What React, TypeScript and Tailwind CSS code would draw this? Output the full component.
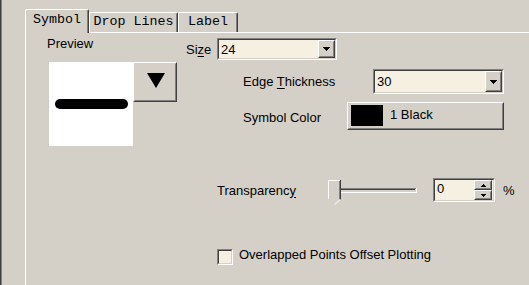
const sunkenOuter = "border border-t-[#808080] border-l-[#808080] border-b-white border-r-white";
const sunkenInner = "border border-t-[#404040] border-l-[#404040] border-b-[#d4d0c8] border-r-[#d4d0c8]";
const raisedOuter = "border border-t-white border-l-white border-b-[#404040] border-r-[#404040]";
const raisedInner = "border border-t-[#d4d0c8] border-l-[#d4d0c8] border-b-[#808080] border-r-[#808080]";

function Arrow({ up = false }: { up?: boolean }) {
  return (
    <svg width="7" height="4" viewBox="0 0 7 4" shapeRendering="crispEdges">
      <path d={up ? "M3 0h1v1h1v1h1v1h1v1H0V3h1V2h1V1h1z" : "M0 0h7v1H6v1H5v1H4v1H3V3H2V2H1V1H0z"} fill="#000" />
    </svg>
  );
}

function Combo({ value, className }: { value: string; className: string }) {
  return (
    <div className={`${sunkenOuter} ${className}`}>
      <div className={`${sunkenInner} flex h-full bg-[#f5f0e1]`}>
        <span className="flex-1 self-center pl-[2px] leading-[15px]">{value}</span>
        <div className={`${raisedOuter} h-full w-[17px]`}>
          <div className={`${raisedInner} flex h-full items-center justify-center bg-[#d4d0c8]`}>
            <Arrow />
          </div>
        </div>
      </div>
    </div>
  );
}

function SpinBtn({ up }: { up?: boolean }) {
  return (
    <div className={`${raisedOuter} h-[10px] w-[18px]`}>
      <div className={`${raisedInner} flex h-full items-center justify-center bg-[#d4d0c8]`}>
        <svg width="5" height="3" viewBox="0 0 5 3" shapeRendering="crispEdges">
          <path d={up ? "M2 0h1v1h1v1h1v1H0V2h1V1h1z" : "M0 0h5v1H4v1H3v1H2V2H1V1H0z"} fill="#000" />
        </svg>
      </div>
    </div>
  );
}

function Slider() {
  return (
    <svg width="90" height="27" viewBox="0 0 90 27" shapeRendering="crispEdges">
      {/* track */}
      <rect x="13" y="10" width="75" height="1" fill="#808080" />
      <rect x="13" y="11" width="74" height="1" fill="#404040" />
      <rect x="13" y="14" width="76" height="1" fill="#ffffff" />
      <rect x="88" y="10" width="1" height="5" fill="#ffffff" />
      {/* thumb */}
      <rect x="0" y="2" width="12" height="1" fill="#ffffff" />
      <rect x="0" y="2" width="1" height="19" fill="#ffffff" />
      <rect x="11" y="3" width="1" height="18" fill="#808080" />
      <rect x="12" y="2" width="1" height="20" fill="#404040" />
      <path d="M12.5 21.5 L6.5 26.5" stroke="#ffffff" strokeWidth="1" shapeRendering="auto" />
    </svg>
  );
}

export default function App() {
  return (
    <div className="flex h-[285px] w-[529px] overflow-hidden bg-[#d4d0c8] font-['Liberation_Sans',Arial,sans-serif] text-[13px] leading-[15px] text-black">
      {/* window edge */}
      <div className="w-[1px] bg-[#404040]" />
      <div className="w-[1px] bg-[#808080]" />
      <div className="w-[23px]" />

      <div className="flex flex-1 flex-col">
        {/* tabs */}
        <div className="flex h-[32px] items-end font-['Liberation_Mono','Courier_New',monospace] text-[13.33px]">
          <div className="relative z-10 -mb-[1px] h-[24px] w-[64px] rounded-t-[2px] border-l border-t border-r border-l-white border-t-white border-r-[#404040] bg-[#d4d0c8] pt-[2px] text-center shadow-[inset_-1px_0_#808080]">
            Symbol
          </div>
          <div className="h-[20px] w-[89px] rounded-t-[2px] border-l border-t border-r border-l-white border-t-white border-r-[#404040] pt-[1px] text-center shadow-[inset_-1px_0_#808080]">
            Drop Lines
          </div>
          <div className="h-[20px] w-[60px] rounded-t-[2px] border-l border-t border-r border-l-white border-t-white border-r-[#404040] pt-[1px] text-center shadow-[inset_-1px_0_#808080]">
            Label
          </div>
        </div>

        {/* tab page */}
        <div className="flex flex-1 flex-col border-l border-t border-white">
          <div className="flex items-start">
            {/* preview */}
            <div className="ml-[23px] mt-[3px] flex flex-col">
              <div className="-ml-[2px] h-[15px]">Preview</div>
              <div className="mt-[11px] flex items-start">
                <div className="h-[84px] w-[84px] bg-white pl-[6px] pt-[37px]">
                  <div className="h-[10px] w-[73px] rounded-[5px] bg-black" />
                </div>
                <div className={`${raisedOuter} h-[40px] w-[44px]`}>
                  <div className={`${raisedInner} h-full bg-[#d4d0c8] pl-[12px] pt-[9px]`}>
                    <svg width="18" height="15" viewBox="0 0 18 15">
                      <path d="M0 0h18L9 15z" fill="#000" />
                    </svg>
                  </div>
                </div>
              </div>
            </div>

            {/* settings */}
            <div className="ml-[9px] mt-[5px] flex flex-col">
              <div className="flex items-center">
                <span className="w-[31px]">
                  Si<span className="underline underline-offset-2">z</span>e
                </span>
                <Combo value="24" className="h-[22px] w-[120px]" />
              </div>
              <div className="ml-[57px] mt-[9px] flex items-center">
                <span className="w-[130px]">
                  Edge <span className="underline underline-offset-2">T</span>hickness
                </span>
                <Combo value="30" className="h-[25px] w-[131px]" />
              </div>
              <div className="ml-[57px] mt-[8px] flex items-start">
                <span className="w-[104px] pt-[8px]">Symbol Color</span>
                <div className={`${raisedOuter} h-[28px] w-[157px]`}>
                  <div className={`${raisedInner} flex h-full items-start pl-[2px] pt-[1px]`}>
                    <div className="h-[21px] w-[32px] bg-black" />
                    <span className="ml-[7px] mt-[2px]">1 Black</span>
                  </div>
                </div>
              </div>
            </div>
          </div>

          {/* transparency */}
          <div className="ml-[191px] mt-[32px] flex items-start">
            <span className="flex h-[24px] w-[111px] items-center">
              Transparenc<span className="underline underline-offset-2">y</span>
            </span>
            <Slider />
            <div className={`${sunkenOuter} ml-[15px] h-[24px] w-[62px]`}>
              <div className={`${sunkenInner} flex h-full bg-[#f5f0e1]`}>
                <span className="flex-1 pl-[2px] pt-[1px]">0</span>
                <div className="mr-[1px] flex flex-col">
                  <SpinBtn up />
                  <SpinBtn />
                </div>
              </div>
            </div>
            <span className="ml-[8px] flex h-[24px] items-center">%</span>
          </div>

          {/* checkbox */}
          <div className="ml-[191px] mt-[44px] flex items-start">
            <div className={`${sunkenOuter} h-[16px] w-[16px]`}>
              <div className={`${sunkenInner} h-full bg-[#f5f0e1]`} />
            </div>
            <span className="-mt-[2px] ml-[6px]">Overlapped Points Offset Plotting</span>
          </div>
        </div>
      </div>
    </div>
  );
}
